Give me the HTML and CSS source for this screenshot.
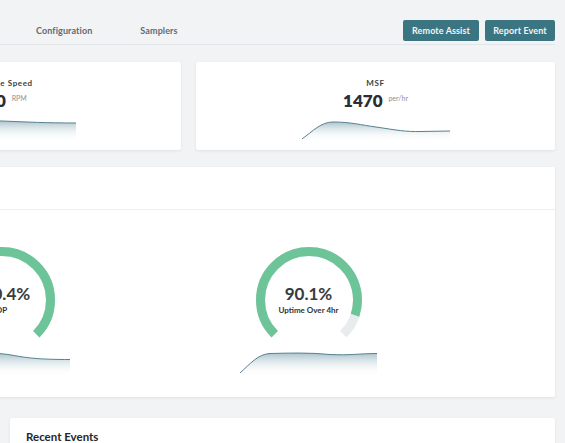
FILE: index.html
```html
<!DOCTYPE html>
<html lang="en">
<head>
<meta charset="utf-8">
<title>Dashboard</title>
<link rel="stylesheet" href="styles.css">
</head>
<body>
<div class="main">
  <header class="topbar">
    <nav class="nav">
      <a class="nav-item">Configuration</a>
      <a class="nav-item">Samplers</a>
    </nav>
    <div class="actions">
      <button class="btn btn-assist">Remote Assist</button>
      <button class="btn btn-report">Report Event</button>
    </div>
  </header>

  <section class="stats">
    <div class="card stat">
      <div class="stat-title">Machine Speed</div>
      <div class="stat-value">180 <span class="unit">RPM</span></div>
      <svg class="spark spark-wide" width="149" height="22" viewBox="0 0 149 22">
        <defs>
          <linearGradient id="g1" x1="0" y1="0" x2="0" y2="1">
            <stop offset="0" stop-color="#9dbac4" stop-opacity="0.85"/>
            <stop offset="1" stop-color="#ffffff" stop-opacity="0"/>
          </linearGradient>
        </defs>
        <path d="M0 9 C 30 4, 50 1, 75 2 C 100 3, 120 4, 149 4 L149 22 L0 22 Z" fill="url(#g1)"/>
        <path d="M0 9 C 30 4, 50 1, 75 2 C 100 3, 120 4, 149 4" fill="none" stroke="#57828f" stroke-width="1"/>
      </svg>
    </div>
    <div class="card stat">
      <div class="stat-title">MSF</div>
      <div class="stat-value">1470 <span class="unit">per/hr</span></div>
      <svg class="spark spark-wide" width="149" height="22" viewBox="0 0 149 22">
        <defs>
          <linearGradient id="g2" x1="0" y1="0" x2="0" y2="1">
            <stop offset="0" stop-color="#9dbac4" stop-opacity="0.85"/>
            <stop offset="1" stop-color="#ffffff" stop-opacity="0"/>
          </linearGradient>
        </defs>
        <path d="M1 20 C 12 12, 20 3, 32 3 C 50 3, 60 6, 75 8 C 95 11, 105 13, 120 12.5 L149 12 L149 22 L1 22 Z" fill="url(#g2)"/>
        <path d="M1 20 C 12 12, 20 3, 32 3 C 50 3, 60 6, 75 8 C 95 11, 105 13, 120 12.5 L149 12" fill="none" stroke="#57828f" stroke-width="1"/>
      </svg>
    </div>
  </section>

  <section class="card panel">
    <div class="panel-head"></div>
    <div class="panel-body">
      <div class="gauge-col">
        <div class="gauge">
          <svg class="gauge-svg" width="110" height="96" viewBox="0 0 110 96">
            <path d="M20.71 90.29 A48.5 48.5 0 1 1 89.29 90.29" fill="none" stroke="#e8eced" stroke-width="9"/>
            <path d="M20.71 90.29 A48.5 48.5 0 1 1 89.29 90.29" fill="none" stroke="#6ec499" stroke-width="9" pathLength="100" stroke-dasharray="100 100"/>
          </svg>
          <div class="gauge-text">
            <div class="gauge-value">100.4%</div>
            <div class="gauge-label">OP</div>
          </div>
        </div>
        <svg class="spark" width="137" height="24" viewBox="0 0 137 24">
          <defs>
            <linearGradient id="g3" x1="0" y1="0" x2="0" y2="1">
              <stop offset="0" stop-color="#9dbac4" stop-opacity="0.85"/>
              <stop offset="1" stop-color="#ffffff" stop-opacity="0"/>
            </linearGradient>
          </defs>
          <path d="M0 18 C 10 8, 25 2, 45 1.5 C 58 1, 66 1, 78 3 C 95 6, 105 7.5, 137 7.5 L137 24 L0 24 Z" fill="url(#g3)"/>
          <path d="M0 18 C 10 8, 25 2, 45 1.5 C 58 1, 66 1, 78 3 C 95 6, 105 7.5, 137 7.5" fill="none" stroke="#57828f" stroke-width="1"/>
        </svg>
      </div>
      <div class="gauge-col">
        <div class="gauge">
          <svg class="gauge-svg" width="110" height="96" viewBox="0 0 110 96">
            <path d="M20.71 90.29 A48.5 48.5 0 1 1 89.29 90.29" fill="none" stroke="#e8eced" stroke-width="9"/>
            <path d="M20.71 90.29 A48.5 48.5 0 1 1 89.29 90.29" fill="none" stroke="#6ec499" stroke-width="9" pathLength="100" stroke-dasharray="90.1 100"/>
          </svg>
          <div class="gauge-text">
            <div class="gauge-value">90.1%</div>
            <div class="gauge-label">Uptime Over 4hr</div>
          </div>
        </div>
        <svg class="spark" width="137" height="24" viewBox="0 0 137 24">
          <defs>
            <linearGradient id="g4" x1="0" y1="0" x2="0" y2="1">
              <stop offset="0" stop-color="#9dbac4" stop-opacity="0.85"/>
              <stop offset="1" stop-color="#ffffff" stop-opacity="0"/>
            </linearGradient>
          </defs>
          <path d="M0 21 C 10 12, 18 2, 30 1.5 C 50 1, 70 0.5, 90 2.5 C 110 3.5, 120 1.5, 137 1.5 L137 24 L0 24 Z" fill="url(#g4)"/>
          <path d="M0 21 C 10 12, 18 2, 30 1.5 C 50 1, 70 0.5, 90 2.5 C 110 3.5, 120 1.5, 137 1.5" fill="none" stroke="#57828f" stroke-width="1"/>
        </svg>
      </div>
    </div>
  </section>

  <section class="lower">
    <div class="card side"></div>
    <div class="card events">
      <h2 class="events-title">Recent Events</h2>
    </div>
  </section>
</div>
</body>
</html>
```

FILE: styles.css
```css
* { box-sizing: border-box; }

html, body {
  margin: 0;
  padding: 0;
  background: #f2f3f5;
  overflow: hidden;
}

body {
  font-family: Lato, "Liberation Sans", sans-serif;
  color: #2e3136;
}

.main {
  margin-left: -178px;
  width: 733px;
}

.topbar {
  display: flex;
  justify-content: space-between;
  align-items: center;
  height: 45px;
  padding: 20px 0 3px;
  border-bottom: 1px solid #e3e5e8;
}

.nav {
  display: flex;
  gap: 48px;
  padding-left: 214px;
}

.nav-item {
  font-size: 9px;
  font-weight: 700;
  color: #656a71;
  letter-spacing: 0.1px;
  white-space: nowrap;
}

.actions {
  display: flex;
  gap: 6px;
}

.btn {
  height: 21px;
  padding: 0;
  border: 0;
  border-radius: 2px;
  background: #3c7582;
  color: #f2f6f7;
  font-family: inherit;
  font-size: 9px;
  font-weight: 700;
  letter-spacing: 0.1px;
  white-space: nowrap;
}

.btn-assist { width: 76px; }
.btn-report { width: 70px; }

.card {
  background: #ffffff;
  border-radius: 2px;
  box-shadow: 0 1px 3px rgba(40, 50, 60, 0.09);
}

.stats {
  display: grid;
  grid-template-columns: 1fr 1fr;
  gap: 15px;
  margin-top: 17px;
}

.stat {
  height: 88px;
  padding-top: 16px;
  display: flex;
  flex-direction: column;
  align-items: center;
}

.stat-title {
  font-size: 8px;
  line-height: 10px;
  font-weight: 700;
  letter-spacing: 0.6px;
  color: #3a3e44;
  white-space: nowrap;
}

.stat-value {
  font-size: 17px;
  line-height: 20px;
  font-weight: 800;
  color: #2b2e33;
  white-space: nowrap;
}

.unit {
  font-size: 7px;
  font-weight: 400;
  color: #8b9096;
  vertical-align: 6px;
  margin-left: 2px;
}

.spark {
  display: block;
}

.spark-wide {
  margin-top: 8px;
}

.panel {
  margin-top: 17px;
}

.panel-head {
  height: 43px;
  border-bottom: 1px solid #eceef0;
}

.panel-body {
  display: grid;
  grid-template-columns: 307px 307px;
  padding: 34px 0 21px 26px;
}

.gauge-col {
  display: flex;
  flex-direction: column;
  align-items: center;
}

.gauge {
  display: grid;
  justify-items: center;
}

.gauge > * {
  grid-area: 1 / 1;
}

.gauge-svg {
  display: block;
}

.gauge-text {
  padding-top: 40px;
  text-align: center;
}

.gauge-value {
  font-size: 17px;
  line-height: 20px;
  font-weight: 700;
  color: #383b40;
}

.gauge-label {
  font-size: 8px;
  line-height: 12px;
  font-weight: 700;
  color: #2f3237;
  white-space: nowrap;
}

.gauge-col .spark {
  margin-top: 12px;
}

.lower {
  display: grid;
  grid-template-columns: 173px 1fr;
  gap: 15px;
  margin-top: 21px;
}

.events {
  height: 80px;
  padding: 12px 16px;
}

.events-title {
  margin: 0;
  font-size: 11.5px;
  line-height: 14px;
  font-weight: 700;
  color: #23262a;
}
```
